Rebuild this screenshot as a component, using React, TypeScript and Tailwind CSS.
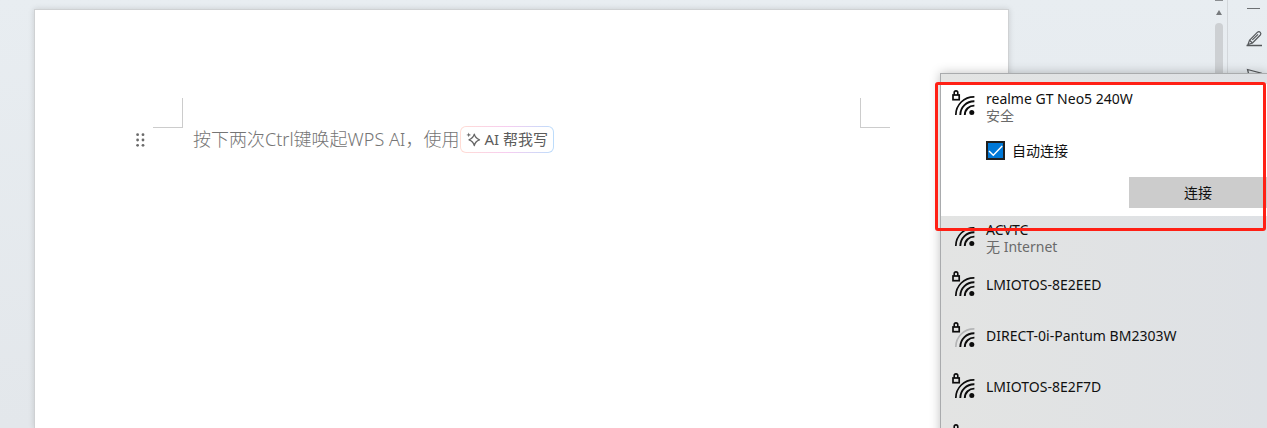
import clsx from "clsx";

type Network = {
  name: string;
  status?: string;
  secured: boolean;
  bars: 2 | 3;
};

const networks: Network[] = [
  { name: "LMIOTOS-8E2EED", secured: true, bars: 3 },
  { name: "DIRECT-0i-Pantum BM2303W", secured: true, bars: 2 },
  { name: "LMIOTOS-8E2F7D", secured: true, bars: 3 },
  { name: "", secured: true, bars: 3 },
];

const WifiIcon = ({ secured, bars }: { secured: boolean; bars: 2 | 3 }) => (
  <svg
    width="24"
    height="27"
    viewBox="0 0 24 27"
    fill="none"
    stroke="#0c0c0c"
    className="shrink-0"
    aria-hidden="true"
  >
    {secured && (
      <>
        <path d="M2.2 5V2.8a1.8 1.9 0 0 1 3.6 0V5" strokeWidth="1.6" />
        <rect x="1" y="5" width="6.2" height="4.7" strokeWidth="1.7" />
      </>
    )}
    <path
      d="M3.8 25A18.2 18.2 0 0 1 22.4 6.8"
      strokeWidth="1.7"
      className={clsx(bars === 2 && "stroke-[#b4b5b6]")}
    />
    <path d="M8.3 25A13.8 13.8 0 0 1 22.4 11.2" strokeWidth="1.9" />
    <path d="M12.8 25A9.4 9.4 0 0 1 22.4 15.6" strokeWidth="1.9" />
    <circle cx="19.8" cy="22.6" r="2.5" fill="#0c0c0c" stroke="none" />
  </svg>
);

const NetworkText = ({ name, status }: { name: string; status?: string }) => (
  <div className="text-[14px] leading-[17px]">
    <p className="text-[#101010]">{name}</p>
    {status && <p className="text-[#6a6a6a]">{status}</p>}
  </div>
);

const DocumentPage = () => (
  <main className="mt-[9px] ml-[34px] mr-[202px] flex-1 border border-b-0 border-[#cfd1d3] bg-white pt-[88px] shadow-[0_0_6px_rgba(0,0,0,0.14)]">
    <div className="flex justify-between px-[118px]">
      <div className="h-[30px] w-[30px] border-r border-b border-[#cccccc]" />
      <div className="h-[30px] w-[30px] border-b border-l border-[#cccccc]" />
    </div>
    <div className="-mt-[2px] flex items-center pl-[101px]">
      <svg width="9" height="14" viewBox="0 0 9 14" fill="#6b6b6b" aria-hidden="true">
        <circle cx="1.6" cy="1.7" r="1.4" />
        <circle cx="7" cy="1.7" r="1.4" />
        <circle cx="1.6" cy="7" r="1.4" />
        <circle cx="7" cy="7" r="1.4" />
        <circle cx="1.6" cy="12.3" r="1.4" />
        <circle cx="7" cy="12.3" r="1.4" />
      </svg>
      <p className="ml-12 text-[18px] leading-[27px] font-light whitespace-nowrap text-[#757575]">
        按下两次Ctrl键唤起WPS AI，使用
      </p>
      <div className="ml-px rounded-md bg-linear-to-r from-[#ffdcd4] via-[#f7cdf0] to-[#bcdcfb] p-px">
        <button
          type="button"
          className="flex h-[25px] items-center gap-[3px] rounded-[5px] bg-white px-[5px] text-[15px] whitespace-nowrap text-[#5c5c5c]"
        >
          <svg width="15" height="15" viewBox="0 0 15 15" fill="none" stroke="#666666" aria-hidden="true">
            <path
              d="M8.3 2.2C9 5.2 10 6.5 13.5 7.8C10 9 9 10.4 8.3 13.5C7.5 10.4 6.4 9 3 7.8C6.4 6.5 7.5 5.2 8.3 2.2Z"
              strokeWidth="1.3"
              strokeLinejoin="round"
            />
            <path
              d="M2.7 0.5L3.3 2.3L5.1 2.9L3.3 3.5L2.7 5.3L2.1 3.5L0.3 2.9L2.1 2.3Z"
              fill="#666666"
              stroke="none"
            />
          </svg>
          AI 帮我写
        </button>
      </div>
    </div>
  </main>
);

const ScrollBar = () => (
  <div className="flex w-4 flex-col items-center">
    <div className="h-px w-2 bg-[#8b8e91]" />
    <svg width="6" height="5" viewBox="0 0 6 5" fill="#777a7d" className="mt-[9px]" aria-hidden="true">
      <path d="M3 0L6 5H0Z" />
    </svg>
    <div className="mt-[8px] w-2 flex-1 rounded-full bg-[#cdd0d3]" />
  </div>
);

const ToolBar = () => (
  <aside className="flex w-10 flex-col items-end border-l border-[#d3d7db] pt-[8px] pr-[4px]">
    <div className="mr-[3px] h-px w-[13px] bg-[#6d7073]" />
    <button type="button" aria-label="Pen" className="mt-[21px]">
      <svg width="18" height="18" viewBox="0 0 18 18" fill="none" stroke="#55585b" strokeWidth="1.2" aria-hidden="true">
        <path d="M3 14.5L4.5 10.3L12.5 2.2Q14 1 15.3 2.3Q16.5 3.6 15.3 5L7.5 13L3 14.5Z" />
        <path d="M4.5 10.3L7.5 13M7.3 9.9L13 4.4" />
        <path d="M1.5 15.5H17" strokeWidth="1.5" />
      </svg>
    </button>
    <button type="button" aria-label="Select" className="mt-[20px]">
      <svg width="18" height="18" viewBox="0 0 18 18" fill="none" stroke="#55585b" strokeWidth="1.2" aria-hidden="true">
        <path d="M2.5 1.5L15.5 5L9.5 8.5L6 15Z" />
      </svg>
    </button>
  </aside>
);

const WifiFlyout = () => (
  <section className="absolute top-[73px] right-0 w-[327px] border-t border-l border-[#a9abad] bg-linear-to-r from-[#e3e4e3] to-[#dee1e5] pt-[10px] shadow-[0_0_10px_rgba(0,0,0,0.25)]">
    <div className="bg-white pt-[6px] pb-[8px]">
      <div className="flex gap-[10px] pl-[11px]">
        <WifiIcon secured bars={3} />
        <NetworkText name="realme GT Neo5 240W" status="安全" />
      </div>
      <label className="mt-[17px] flex items-center pl-[45px] text-[14px] leading-[18px] text-[#101010]">
        <span className="grid">
          <input
            type="checkbox"
            defaultChecked
            className="peer col-start-1 row-start-1 h-[19px] w-[19px] appearance-none border-2 border-[#1f1f1f] bg-white checked:bg-[#0078d7]"
          />
          <svg
            width="19"
            height="19"
            viewBox="0 0 19 19"
            fill="none"
            stroke="white"
            strokeWidth="1.4"
            className="pointer-events-none invisible col-start-1 row-start-1 peer-checked:visible"
            aria-hidden="true"
          >
            <path d="M3 10L7.3 14.3L16.2 5" />
          </svg>
        </span>
        <span className="ml-[7px]">自动连接</span>
      </label>
      <button
        type="button"
        className="mt-[17px] ml-auto block h-[31px] w-[138px] bg-[#cccccc] text-[14px] text-[#101010]"
      >
        连接
      </button>
    </div>
    <div className="flex h-[43px] items-start gap-[10px] pt-[5px] pl-[11px]">
      <WifiIcon secured={false} bars={3} />
      <NetworkText name="ACVTC" status="无 Internet" />
    </div>
    <ul>
      {networks.map((network) => (
        <li key={network.name} className="flex h-[51px] items-center gap-[10px] pl-[11px]">
          <WifiIcon secured={network.secured} bars={network.bars} />
          <NetworkText name={network.name} />
        </li>
      ))}
    </ul>
    {/* highlight around the selected network */}
    <div className="pointer-events-none absolute top-[8px] right-px -left-[6px] h-[149px] rounded-[3px] border-3 border-[#ff2015]" />
  </section>
);

const App = () => {
  return (
    <div className="relative flex h-screen overflow-hidden bg-linear-to-b from-[#e8edf1] to-[#e3e7eb] font-['Noto_Sans','Noto_Sans_CJK_SC',sans-serif]">
      <DocumentPage />
      <ScrollBar />
      <ToolBar />
      <WifiFlyout />
    </div>
  );
};

export default App;
